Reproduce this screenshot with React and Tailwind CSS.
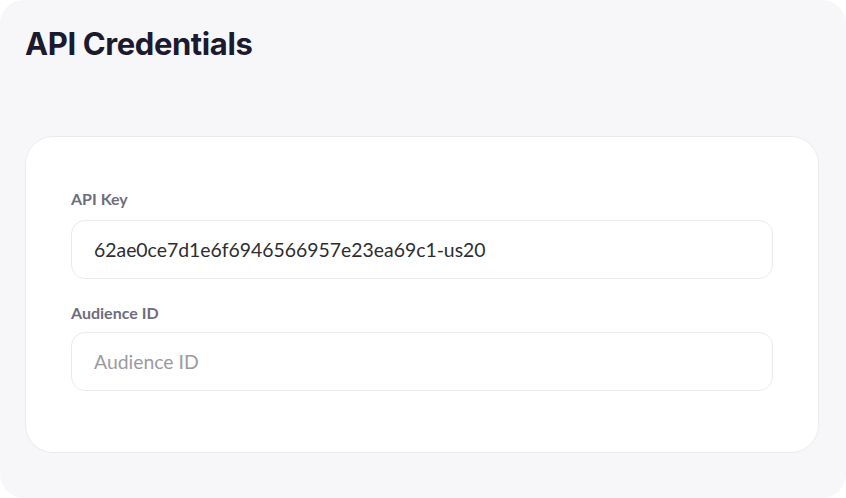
export default function App() {
  return (
    <div className="w-[846px] h-[498px] bg-white">
      <div className="h-full rounded-[24px] bg-[#f7f7f9] pl-[25px] pr-[27px] pt-[25px] flex flex-col">
        <h1 className="font-['Inter',sans-serif] text-[31px] font-bold leading-[38px] tracking-[-0.4px] text-[#1b1a2e]">
          API Credentials
        </h1>
        <div className="mt-[73px] bg-white border border-[#ebebef] rounded-[28px] px-[45px] pt-[52px] pb-[61px] font-['Lato',sans-serif]">
          <label className="block text-[16px] font-bold leading-[20px] text-[#6e6d7c]">API Key</label>
          <input
            type="text"
            defaultValue="62ae0ce7d1e6f6946566957e23ea69c1-us20"
            className="mt-[11px] w-full h-[59px] rounded-[14px] border border-[#ebebee] bg-white px-[22px] text-[19.4px] text-[#2d2d31] outline-none"
          />
          <label className="mt-[24px] block text-[16px] font-bold leading-[20px] text-[#6e6d7c]">Audience ID</label>
          <input
            type="text"
            placeholder="Audience ID"
            className="mt-[9px] w-full h-[59px] rounded-[14px] border border-[#ebebee] bg-white px-[22px] text-[19.4px] text-[#2d2d31] placeholder:text-[#9b9b9f] outline-none"
          />
        </div>
      </div>
    </div>
  );
}
